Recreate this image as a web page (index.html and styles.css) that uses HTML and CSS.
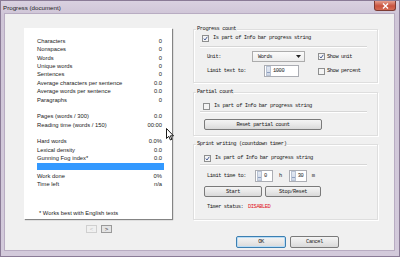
FILE: index.html
```html
<!DOCTYPE html>
<html lang="en">
<head>
<meta charset="UTF-8" />
<title>Progress (document)</title>
<link rel="stylesheet" href="styles.css">
</head>
<body>

<div class="window">

  <!-- ───── TITLE BAR ───── -->
  <div class="titlebar">
    <span class="title">Progress (document)</span>
    <span class="close">
      <svg width="7" height="6" viewBox="0 0 7 6"><path d="M1 0.5 L6 5.5 M6 0.5 L1 5.5" stroke="#fff" stroke-width="1.4"/></svg>
    </span>
  </div>

  <div class="client">

    <!-- ───── STATS CARD ───── -->
    <div class="left">
      <div class="card">
        <div class="row"><span>Characters</span><span>0</span></div>
        <div class="row"><span>Nonspaces</span><span>0</span></div>
        <div class="row"><span>Words</span><span>0</span></div>
        <div class="row"><span>Unique words</span><span>0</span></div>
        <div class="row"><span>Sentences</span><span>0</span></div>
        <div class="row"><span>Average characters per sentence</span><span>0.0</span></div>
        <div class="row"><span>Average words per sentence</span><span>0.0</span></div>
        <div class="row"><span>Paragraphs</span><span>0</span></div>
        <div class="blank"></div>
        <div class="row"><span>Pages (words / 300)</span><span>0.0</span></div>
        <div class="row"><span>Reading time (words / 150)</span><span>00:00</span></div>
        <div class="blank"></div>
        <div class="row"><span>Hard words</span><span>0.0%</span></div>
        <div class="row"><span>Lexical density</span><span>0.0</span></div>
        <div class="row"><span>Gunning Fog index*</span><span>0.0</span></div>
        <div class="selbar"></div>
        <div class="row"><span>Work done</span><span>0%</span></div>
        <div class="row"><span>Time left</span><span>n/a</span></div>
        <div class="note">* Works best with English texts</div>
      </div>
      <div class="pager">
        <span class="navbtn off">&lt;</span>
        <span class="navbtn">&gt;</span>
      </div>
    </div>

    <!-- ───── SETTINGS ───── -->
    <div class="right">

      <div class="group g1">
        <div class="legend">Progress count</div>
        <div class="checkrow">
          <svg class="cb" width="7" height="7" viewBox="0 0 7 7"><rect x=".5" y=".5" width="6" height="6" fill="#f4f4f4" stroke="#8e8f8f"/><path d="M1.8 3.6 L3 5 L5.3 1.8" fill="none" stroke="#4a5f97" stroke-width="1"/></svg>
          <span>Is part of Info bar progress string</span>
        </div>
        <div class="sep"></div>
        <div class="formrow unitrow">
          <span class="lbl">Unit:</span>
          <span class="combo">Words<svg width="5" height="3" viewBox="0 0 5 3"><path d="M0 0 H5 L2.5 3 Z" fill="#222"/></svg></span>
          <span class="opt">
            <svg class="cb" width="7" height="7" viewBox="0 0 7 7"><rect x=".5" y=".5" width="6" height="6" fill="#f4f4f4" stroke="#8e8f8f"/><path d="M1.8 3.6 L3 5 L5.3 1.8" fill="none" stroke="#4a5f97" stroke-width="1"/></svg>
            <span>Show unit</span>
          </span>
        </div>
        <div class="formrow limitrow">
          <span class="lbl">Limit text to:</span>
          <span class="spin wide"><span class="arrows"></span>1000</span>
          <span class="opt">
            <svg class="cb" width="7" height="7" viewBox="0 0 7 7"><rect x=".5" y=".5" width="6" height="6" fill="#f4f4f4" stroke="#8e8f8f"/></svg>
            <span>Show percent</span>
          </span>
        </div>
      </div>

      <div class="group g2">
        <div class="legend">Partial count</div>
        <div class="checkrow">
          <svg class="cb" width="7" height="7" viewBox="0 0 7 7"><rect x=".5" y=".5" width="6" height="6" fill="#f4f4f4" stroke="#8e8f8f"/></svg>
          <span>Is part of Info bar progress string</span>
        </div>
        <div class="sep"></div>
        <button class="btn reset">Reset partial count</button>
      </div>

      <div class="group g3">
        <div class="legend">Sprint writing (countdown timer)</div>
        <div class="checkrow">
          <svg class="cb" width="7" height="7" viewBox="0 0 7 7"><rect x=".5" y=".5" width="6" height="6" fill="#f4f4f4" stroke="#8e8f8f"/><path d="M1.8 3.6 L3 5 L5.3 1.8" fill="none" stroke="#4a5f97" stroke-width="1"/></svg>
          <span>Is part of Info bar progress string</span>
        </div>
        <div class="sep"></div>
        <div class="formrow timerow">
          <span class="lbl">Limit time to:</span>
          <span class="spin"><span class="arrows"></span>0</span>
          <span class="unit">h</span>
          <span class="spin"><span class="arrows"></span>30</span>
          <span class="unit">m</span>
        </div>
        <div class="btnrow">
          <button class="btn start">Start</button>
          <button class="btn stop">Stop/Reset</button>
        </div>
        <div class="status"><span class="lbl">Timer status:</span><span class="red">DISABLED</span></div>
      </div>

      <div class="actions">
        <button class="btn ok">OK</button>
        <button class="btn cancel">Cancel</button>
      </div>
    </div>
  </div>

  <!-- mouse pointer over the dialog -->
  <svg class="cursor" width="8" height="13" viewBox="0 0 8 13"><path d="M.5 .5 V10.5 L2.8 8.3 L4.4 12 L5.9 11.3 L4.4 7.8 H7.5 Z" fill="#fff" stroke="#000" stroke-width=".9"/></svg>
</div>

</body>
</html>
```

FILE: styles.css
```css
/* ───── RESET ───── */
*{margin:0;padding:0;box-sizing:border-box}
body{background:#fff}

/* ───── WINDOW FRAME ───── */
.window{
  position:relative;width:400px;height:257px;display:flex;flex-direction:column;
  background:linear-gradient(#d9d1e0,#cfc5d7 14px,#d3cadb);
  border:1px solid #8a7b96;
}
.titlebar{height:12px;display:flex;align-items:center}
.title{padding-left:2px;font:6.2px "Liberation Sans",sans-serif;color:#1c1c1c}
.close{
  margin-left:auto;margin-right:3px;align-self:flex-start;
  width:22px;height:10px;display:flex;align-items:center;justify-content:center;
  background:linear-gradient(#e6a08f,#c8533f 55%,#d56c55);
  border:1px solid #7d3b33;border-top:none;border-radius:0 0 3px 3px
}
.client{
  flex:1;display:flex;margin:0 4px 5px 3px;
  background:#f0f0f0;border:1px solid #b8acc2;
}

/* ───── LEFT: stats card ───── */
.left{padding:14px 0 0 19px;display:flex;flex-direction:column}
.card{
  width:148px;height:191px;background:#fff;
  padding:8.8px 10px 0 13px;display:flex;flex-direction:column;
  box-shadow:1px 1px 1px rgba(0,0,0,.45);
  font:5.8px "Liberation Sans",sans-serif;color:#222
}
.row{height:8.4px;line-height:8.4px;display:flex;justify-content:space-between}
.blank{height:8.4px}
.selbar{height:7px;margin:0 -2px 2px 0;background:#3399ff}
.note{margin-top:auto;margin-bottom:2px;margin-left:2px;line-height:8px}

.pager{width:148px;margin-top:6px;display:flex;justify-content:center;gap:4px;padding-left:2px}
.navbtn{
  width:11px;height:8px;display:flex;align-items:center;justify-content:center;
  font:6px "Liberation Sans",sans-serif;color:#333;
  background:#e4e4e4;border:1px solid #9a9a9a
}
.navbtn.off{background:#f0f0f0;border-color:#cfcfcf;color:#c4c4c4}

/* ───── RIGHT: settings groups ───── */
.right{
  margin-left:21px;width:185px;padding-top:15px;
  font-family:"Liberation Mono",monospace;font-size:5.4px;letter-spacing:-.44px;color:#1a1a1a
}
.group{border:1px solid #dedede;box-shadow:inset 1px 1px 0 #fff,1px 1px 0 #fff}
.g1{height:54px}
.g2{height:44px;margin-top:9px}
.g3{height:76px;margin-top:8px}
.legend{
  margin:-5px 0 0 2px;height:8px;line-height:8px;padding:0 1px;
  display:table;background:#f0f0f0
}
.checkrow{height:8px;display:flex;align-items:center;gap:4px}
.g1 .checkrow{margin-top:1px;padding-left:8px}
.g2 .checkrow{margin-top:6px;padding-left:9px}
.g3 .checkrow{margin-top:6px;padding-left:10px}
.cb{flex:none;display:block}
.sep{height:1px;margin:4px 10px 0 6px;background:#d6d6d6;box-shadow:0 1px 0 #fff}
.g2 .sep{margin-top:1px}
.g3 .sep{margin-top:2px}

.formrow{display:flex;align-items:center;padding-left:13px}
.unitrow{height:11px;margin-top:4px}
.limitrow{height:12px;margin-top:3px}
.lbl{flex:none}
.unitrow .lbl,.limitrow .lbl{width:45px}
.combo{
  width:53px;height:11px;display:flex;align-items:center;justify-content:space-between;
  padding:0 3px 0 5px;background:linear-gradient(#fbfbfb,#ececec);border:1px solid #acacac
}
.opt{display:flex;align-items:center;gap:2px;margin-left:13px}
.limitrow .opt{margin-left:19px}
.spin{
  height:12px;display:flex;align-items:center;gap:2px;
  background:#fff;border:1px solid #abadb3;padding-right:2px
}
.spin.wide{width:35px;margin-left:12px}
.arrows{
  width:5px;height:10px;margin-left:1px;
  background:
    linear-gradient(#8fa1c0,#8fa1c0) center 4.5px/5px 1px no-repeat,
    linear-gradient(#e3e9f3,#cfd7e6);
  border:1px solid #b9c3d4
}
.timerow{height:12px;margin-top:5px}
.timerow .lbl{width:48px}
.timerow .spin{width:18px}
.timerow .spin+.unit{margin:0 7px 0 6px}
.timerow .unit:last-child{margin-left:5px}

/* buttons */
.btn{
  height:11px;font:inherit;letter-spacing:inherit;color:#1a1a1a;
  background:linear-gradient(#f4f4f4,#e8e8e8 50%,#d9d9d9);
  border:1px solid #7a7a7a;border-radius:2px
}
.reset{display:block;width:118px;margin:7px 0 0 10px}
.btnrow{display:flex;gap:3px;margin:4px 0 0 10px}
.start{width:58px}
.stop{width:56px}
.status{height:8px;margin-top:6px;padding-left:13px;display:flex;align-items:center}
.status .lbl{width:41px}
.red{color:#e0141e}

.actions{display:flex;gap:4px;margin:16px 0 0 43px}
.ok,.cancel{height:12px}
.ok{width:50px;border-color:#3c7fb1;box-shadow:inset 0 0 0 1px #b9dcf5}
.cancel{width:49px}

/* pointer */
.cursor{position:absolute;left:165px;top:127px}
```
